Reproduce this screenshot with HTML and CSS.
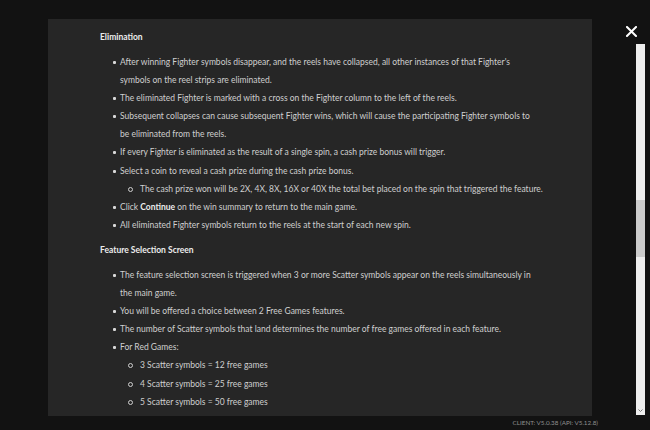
FILE: index.html
```html
<!DOCTYPE html>
<html lang="en">
<head>
  <title>Game Rules</title>
  <link rel="stylesheet" href="styles.css">
</head>
<body>
  <div class="stage">
    <div class="rules-panel">
      <p class="rules-heading">Elimination</p>
      <ul class="rules-list">
        <li>After winning Fighter symbols disappear, and the reels have collapsed, all other instances of that Fighter's<br>symbols on the reel strips are eliminated.</li>
        <li>The eliminated Fighter is marked with a cross on the Fighter column to the left of the reels.</li>
        <li>Subsequent collapses can cause subsequent Fighter wins, which will cause the participating Fighter symbols to<br>be eliminated from the reels.</li>
        <li>If every Fighter is eliminated as the result of a single spin, a cash prize bonus will trigger.</li>
        <li>Select a coin to reveal a cash prize during the cash prize bonus.
          <ul class="sub-list">
            <li>The cash prize won will be 2X, 4X, 8X, 16X or 40X the total bet placed on the spin that triggered the feature.</li>
          </ul>
        </li>
        <li>Click <b>Continue</b> on the win summary to return to the main game.</li>
        <li>All eliminated Fighter symbols return to the reels at the start of each new spin.</li>
      </ul>
      <p class="rules-heading">Feature Selection Screen</p>
      <ul class="rules-list">
        <li>The feature selection screen is triggered when 3 or more Scatter symbols appear on the reels simultaneously in<br>the main game.</li>
        <li>You will be offered a choice between 2 Free Games features.</li>
        <li>The number of Scatter symbols that land determines the number of free games offered in each feature.</li>
        <li>For Red Games:
          <ul class="sub-list">
            <li>3 Scatter symbols = 12 free games</li>
            <li>4 Scatter symbols = 25 free games</li>
            <li>5 Scatter symbols = 50 free games</li>
          </ul>
        </li>
        <li>For Blue Games:</li>
      </ul>
    </div>
    <div class="side">
      <button class="close-btn">
        <svg width="11" height="11" viewBox="0 0 11 11"><path d="M1 1 L10 10 M10 1 L1 10" stroke="#fff" stroke-width="2" stroke-linecap="square"/></svg>
      </button>
      <div class="scroll-track">
        <div class="scroll-thumb"></div>
        <svg class="scroll-arrow" width="5" height="3" viewBox="0 0 5 3"><path d="M0.5 0.5 L2.5 2.5 L4.5 0.5" stroke="#777" stroke-width="1" fill="none"/></svg>
      </div>
    </div>
  </div>
  <div class="version">CLIENT: V5.0.38 (API: V5.12.8)</div>
</body>
</html>
```
FILE: styles.css
```css
body {
  margin: 0;
  background-color: #121212;
  font-family: Lato, "Liberation Sans", sans-serif;
  height: 430px;
  overflow: hidden;
}
.stage {
  display: flex;
  padding-top: 19px;
}
.rules-panel {
  margin-left: 48px;
  width: 544px;
  height: 397px;
  background-color: #262626;
  overflow: hidden;
  box-sizing: border-box;
  padding: 9px 0 0 52px;
}
.rules-heading {
  margin: 0;
  font-size: 8.5px;
  line-height: 18px;
  font-weight: bold;
  color: #ececec;
}
.rules-list {
  list-style: none;
  margin: 7px 0;
  padding: 0;
  font-size: 8.5px;
  line-height: 18.1px;
  color: #cfcfcf;
  white-space: nowrap;
}
.rules-list > li {
  position: relative;
  padding-left: 20px;
}
.rules-list > li::before {
  content: "";
  position: absolute;
  left: 13px;
  top: 8px;
  width: 3px;
  height: 3px;
  border-radius: 1px;
  background-color: #d8d8d8;
}
.sub-list {
  list-style: none;
  margin: 0;
  padding: 0;
}
.sub-list li {
  position: relative;
  padding-left: 20px;
}
.sub-list li::before {
  content: "";
  position: absolute;
  left: 8px;
  top: 7px;
  width: 3px;
  height: 3px;
  border: 1px solid #cfcfcf;
  border-radius: 50%;
}
.rules-list b {
  color: #ececec;
}
.side {
  display: flex;
  flex-direction: column;
  width: 58px;
}
.close-btn {
  background: transparent;
  border: none;
  padding: 0;
  margin: 7px 0 0 34px;
  width: 11px;
  height: 11px;
  cursor: pointer;
  display: flex;
}
.scroll-track {
  margin: 7px 0 0 44px;
  width: 9px;
  height: 371px;
  background-color: #eeeeee;
  display: flex;
  flex-direction: column;
  align-items: center;
}
.scroll-thumb {
  margin-top: 156px;
  width: 9px;
  height: 57px;
  background-color: #cccccc;
}
.scroll-arrow {
  margin-top: auto;
  margin-bottom: 3px;
}
.version {
  text-align: right;
  padding-right: 52px;
  font-size: 6.3px;
  line-height: 14px;
  color: #909090;
}
```
